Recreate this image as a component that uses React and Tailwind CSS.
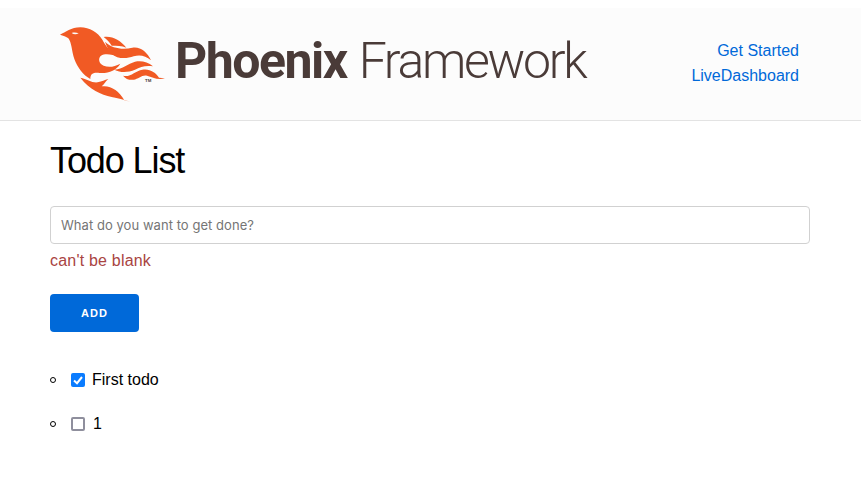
import React from 'react'

const sans = { fontFamily: '"Liberation Sans", Arial, sans-serif' }

const PhoenixBird = () => (
  <svg viewBox="0 0 345 246" className="w-[115px] h-[82px] shrink-0" fill="#f15a24">
    {/* body */}
    <path d="M15 35 C32 28 48 13 76 13 C104 13 128 28 142 50 C152 68 164 88 192 100 C170 94 150 90 138 98 C128 106 132 122 146 128 C160 134 178 132 196 122 C184 142 160 152 134 150 C118 148 106 150 106 168 C84 156 68 134 58 108 C50 84 50 58 40 46 C34 40 24 38 15 35 Z" />
    {/* eye */}
    <path d="M50 30 C56 28 64 28 71 31 C64 35 56 35 50 30 Z" fill="#fcfcfc" />
    {/* top feathers */}
    <path d="M146 42 C172 38 196 52 214 74 C200 68 186 68 170 68 C164 58 156 50 146 42 Z" />
    <path d="M150 56 C172 78 206 80 232 74 C256 70 276 86 288 112 C272 98 254 94 236 100 C214 108 186 108 170 92 C160 82 154 68 150 56 Z" />
    {/* middle feathers */}
    <path d="M178 140 C204 138 218 122 240 116 C258 112 278 116 294 130 C272 126 256 132 240 140 C220 148 198 150 178 140 Z" />
    <path d="M204 158 C226 164 240 144 262 140 C284 136 302 148 312 164 L330 166 C306 172 292 162 276 158 C262 154 250 168 236 170 C224 172 212 168 204 158 Z" />
    {/* bottom feathers */}
    <path d="M76 164 C96 168 110 180 128 178 C142 176 148 170 160 168 C150 176 148 184 140 190 C166 186 192 202 208 232 L226 236 C204 230 190 226 170 222 C138 214 104 200 76 164 Z" />
    {/* tm */}
    <text x="270" y="176" fontSize="13" fontWeight="700" fill="#4a3b38" style={sans}>TM</text>
  </svg>
)

export default function App() {
  return (
    <div className="bg-white min-h-[484px] text-black text-[16px]" style={sans}>
      {/* header */}
      <header className="mt-2 h-[113px] pl-[55px] pr-[62px] bg-[#fcfcfc] border-b border-[#e3e3e3] flex items-center justify-between">
        <div className="flex items-center">
          <PhoenixBird />
          <span className="ml-[5px] -mt-[7px] text-[50px] leading-none text-[#4a3b38] flex items-baseline whitespace-nowrap" style={{ fontFamily: 'Roboto, sans-serif' }}>
            <span className="font-bold tracking-[-1.5px]">Phoenix</span>
            <span className="ml-[12px] font-light tracking-[-2.3px]">Framework</span>
          </span>
        </div>
        <nav className="flex flex-col items-end gap-[5px] text-[#0069d9] leading-[20px] -mt-[1px]">
          <a href="#">Get Started</a>
          <a href="#">LiveDashboard</a>
        </nav>
      </header>

      <main className="px-[50px] w-[860px]">
        <h1 className="mt-[18px] text-[36px] leading-[44px] tracking-[-1.1px] font-normal">Todo List</h1>

        <div className="mt-[23px]">
          <input
            placeholder="What do you want to get done?"
            className="w-full h-[38px] px-[10px] bg-white border border-[#d1d1d1] rounded-[4px] text-[13px] tracking-[0.05px] placeholder:text-[#757575] outline-none"
            style={{ fontFamily: '"Inter", sans-serif' }}
          />
          <p className="mt-[7px] leading-[20px] tracking-[0.2px] text-[#a94442]">can't be blank</p>
        </div>

        <button className="mt-[23px] w-[89px] h-[38px] pt-[1px] bg-[#0069d9] rounded-[4px] text-white text-[11px] font-bold tracking-[1.1px]">
          ADD
        </button>

        <ul className="mt-[26px] list-none">
          <li className="flex items-center h-[44px]">
            <span className="w-[6px] h-[6px] rounded-full border border-black" />
            <span className="ml-[15px] w-[14px] h-[14px] rounded-[2px] bg-[#0a7cff] flex items-center justify-center">
              <svg viewBox="0 0 14 14" className="w-[14px] h-[14px]" fill="none" stroke="white" strokeWidth="2">
                <path d="M3 7.5 L6 10.2 L11 4" />
              </svg>
            </span>
            <span className="ml-[7px]">First todo</span>
          </li>
          <li className="flex items-center h-[44px]">
            <span className="w-[6px] h-[6px] rounded-full border border-black" />
            <span className="ml-[15px] w-[14px] h-[14px] rounded-[2px] bg-white border-2 border-[#8f8f9d]" />
            <span className="ml-[8px]">1</span>
          </li>
        </ul>
      </main>
    </div>
  )
}
